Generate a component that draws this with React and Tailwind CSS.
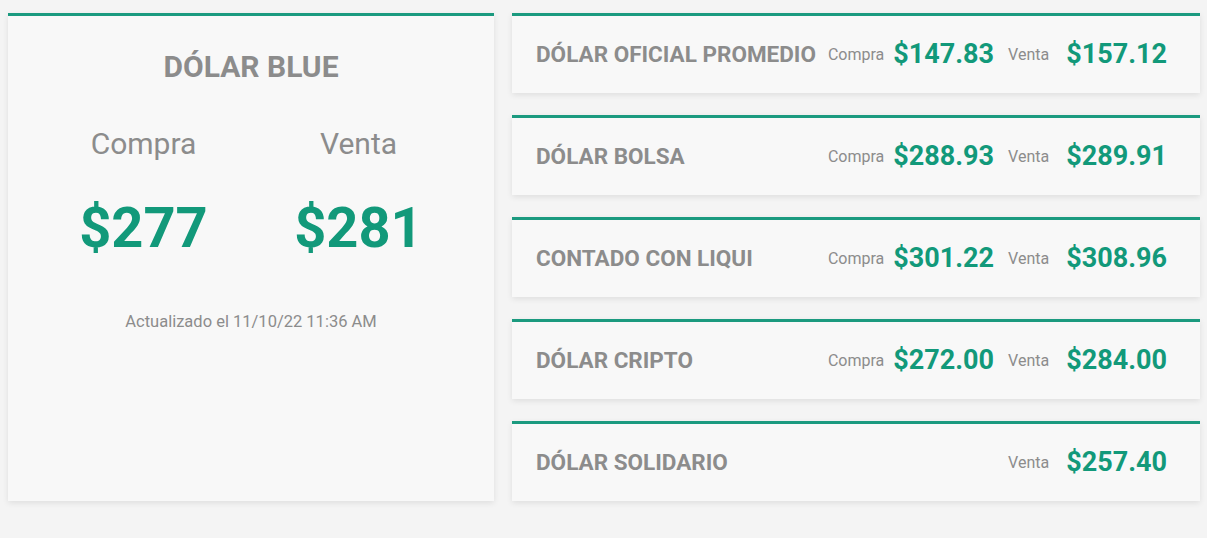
import React from 'react';

const others = [
  { name: 'DÓLAR OFICIAL PROMEDIO', compra: '$147.83', venta: '$157.12' },
  { name: 'DÓLAR BOLSA', compra: '$288.93', venta: '$289.91' },
  { name: 'CONTADO CON LIQUI', compra: '$301.22', venta: '$308.96' },
  { name: 'DÓLAR CRIPTO', compra: '$272.00', venta: '$284.00' },
  { name: 'DÓLAR SOLIDARIO', compra: null, venta: '$257.40' },
];

const Row = ({ item }) => (
  <div className="h-[80px] bg-[#f8f8f8] border-t-[3px] border-[#1b9a7f] shadow-[0_2px_6px_rgba(0,0,0,0.09)] flex items-center pl-[24px] pr-[33px]">
    <h2 className="flex-1 text-[22.5px] font-bold text-[#8c8c8c] leading-none">{item.name}</h2>
    <div className="flex items-center w-[166px] justify-end">
      {item.compra && (
        <>
          <span className="text-[16px] text-[#8c8c8c]">Compra</span>
          <span className="ml-[9px] text-[27px] font-bold text-[#12997a] leading-none">{item.compra}</span>
        </>
      )}
    </div>
    <span className="ml-[14px] text-[16px] text-[#8c8c8c]">Venta</span>
    <span className="ml-[17px] text-[27px] font-bold text-[#12997a] leading-none">{item.venta}</span>
  </div>
);

const App = () => {
  return (
    <div className="min-h-[538px] bg-[#f4f4f4] font-['Roboto',sans-serif] pt-[13px] pl-[8px] pr-[7px]">
      <div className="flex gap-[18px]">
        <section className="w-[486px] bg-[#f8f8f8] border-t-[3px] border-[#1b9a7f] shadow-[0_2px_6px_rgba(0,0,0,0.09)] pt-[36px] px-[28px] text-center">
          <h1 className="text-[30px] font-bold text-[#8c8c8c] leading-none">DÓLAR BLUE</h1>
          <div className="grid grid-cols-2 mt-[47px]">
            <div>
              <p className="text-[30px] text-[#8c8c8c] leading-none">Compra</p>
              <p className="mt-[41px] text-[56px] font-bold text-[#12997a] leading-none">$277</p>
            </div>
            <div>
              <p className="text-[30px] text-[#8c8c8c] leading-none">Venta</p>
              <p className="mt-[41px] text-[56px] font-bold text-[#12997a] leading-none">$281</p>
            </div>
          </div>
          <p className="mt-[58px] text-[16.5px] text-[#8c8c8c] leading-none">Actualizado el 11/10/22 11:36 AM</p>
        </section>
        <div className="flex-1 flex flex-col gap-[22px]">
          {others.map((o) => (
            <Row key={o.name} item={o} />
          ))}
        </div>
      </div>
    </div>
  );
};

export default App;
